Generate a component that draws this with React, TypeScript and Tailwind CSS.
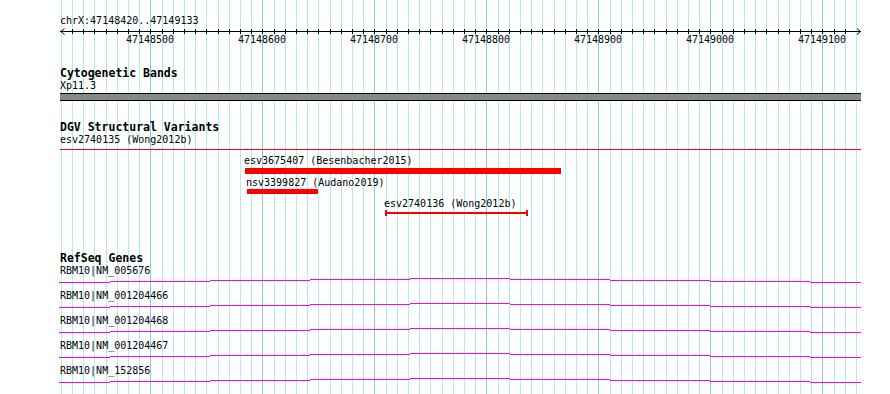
import React from 'react';

// 10bp = 11.2px, first grid line at chrX:47148420
const gx = (k: number) => Math.round(60.8 + 11.2 * k);
const GRID = Array.from({ length: 72 }, (_, k) => k);
const MAJORS = [8, 18, 28, 38, 48, 58, 68];

const GENES = ['RBM10|NM_005676', 'RBM10|NM_001204466', 'RBM10|NM_001204468', 'RBM10|NM_001204467', 'RBM10|NM_152856'];

// x ranges (page coords) and y offset inside the row's svg
const GENE_SEGS: [number, number, number][] = [
  [59, 110, 5],
  [110, 210, 4],
  [210, 310, 3],
  [310, 410, 2],
  [410, 510, 1],
  [510, 610, 2],
  [610, 710, 3],
  [710, 810, 4],
  [810, 861, 5],
];

function Grid() {
  return (
    <svg className="absolute inset-0" width={890} height={394}>
      {GRID.map((k) => (
        <rect
          key={k}
          x={gx(k)}
          y={0}
          width={1}
          height={394}
          fill={(k - 8) % 10 === 0 ? '#84cbea' : '#b2ecef'}
        />
      ))}
    </svg>
  );
}

function Ruler() {
  return (
    <svg width={802} height={7} className="block overflow-visible">
      <rect x={0} y={4} width={801} height={1} fill="#000" />
      {GRID.slice(1, 71).map((k) => (
        <rect key={k} x={gx(k) - 60} y={2} width={1} height={5} fill="#000" />
      ))}
      <polyline points="4.5,1.5 1,4.5 4.5,7.5" fill="none" stroke="#000" strokeWidth={1} />
      <polyline points="797,1.5 800.5,4.5 797,7.5" fill="none" stroke="#000" strokeWidth={1} />
    </svg>
  );
}

function TrackTitle({ children, className = '' }: { children: React.ReactNode; className?: string }) {
  return <div className={`text-[11.5px] leading-[13px] font-bold ${className}`}>{children}</div>;
}

function Variant({
  label,
  start,
  width,
  kind,
  className = '',
}: {
  label: string;
  start: number;
  width: number;
  kind: 'bar' | 'thin';
  className?: string;
}) {
  return (
    <div className={`flex flex-col items-start ${className}`} style={{ marginLeft: start - 60 }}>
      <span className="-ml-[1px]">{label}</span>
      {kind === 'bar' ? (
        <div className="h-[6px] bg-[#ff0000]" style={{ width }} />
      ) : (
        <div className="flex h-[6px] items-center" style={{ width }}>
          <div className="h-full w-[2px] bg-[#ff0000]" />
          <div className="h-[2px] flex-1 bg-[#ff0000]" />
          <div className="h-full w-[2px] bg-[#ff0000]" />
        </div>
      )}
    </div>
  );
}

function GeneRow({ name }: { name: string }) {
  return (
    <div className="h-[25px]">
      <div>{name}</div>
      <svg width={830} height={13} className="block overflow-visible">
        {GENE_SEGS.map(([a, b, y]) => (
          <rect key={a} x={a - 60} y={y} width={b - a} height={1} fill="#ff00ff" />
        ))}
      </svg>
    </div>
  );
}

export default function App() {
  return (
    <div className="relative w-[890px] h-[394px] overflow-hidden bg-white text-black font-['DejaVu_Sans_Mono',monospace] text-[10px] leading-[12px]">
      <Grid />
      <div className="relative pl-[60px] pt-[15px]">
        <div>chrX:47148420..47149133</div>
        <Ruler />
        <div className="relative h-[12px]">
          {MAJORS.map((k, i) => (
            <span key={k} className="absolute top-0 -translate-x-1/2" style={{ left: gx(k) - 60 }}>
              {47148500 + i * 100}
            </span>
          ))}
        </div>

        <TrackTitle className="mt-[21px]">Cytogenetic Bands</TrackTitle>
        <div>Xp11.3</div>
        <div className="mt-[1px] h-[8px] w-[801px] bg-[#888888] border-y border-black" />

        <TrackTitle className="mt-[20px]">DGV Structural Variants</TrackTitle>
        <div>esv2740135 (Wong2012b)</div>
        <div className="mt-[3px] h-[1px] w-[801px] bg-[#ff0000]" />

        <div className="flex h-[70px] flex-col pt-[5px]">
          <Variant label="esv3675407 (Besenbacher2015)" start={245} width={316} kind="bar" className="[&>div]:mt-[1px]" />
          <Variant label="nsv3399827 (Audano2019)" start={247} width={71} kind="bar" className="mt-[3px] [&>div]:h-[5px]" />
          <Variant label="esv2740136 (Wong2012b)" start={385} width={143} kind="thin" className="mt-[4px]" />
        </div>

        <TrackTitle className="mt-[32px]">RefSeq Genes</TrackTitle>
        {GENES.map((g) => (
          <GeneRow key={g} name={g} />
        ))}
      </div>
    </div>
  );
}
